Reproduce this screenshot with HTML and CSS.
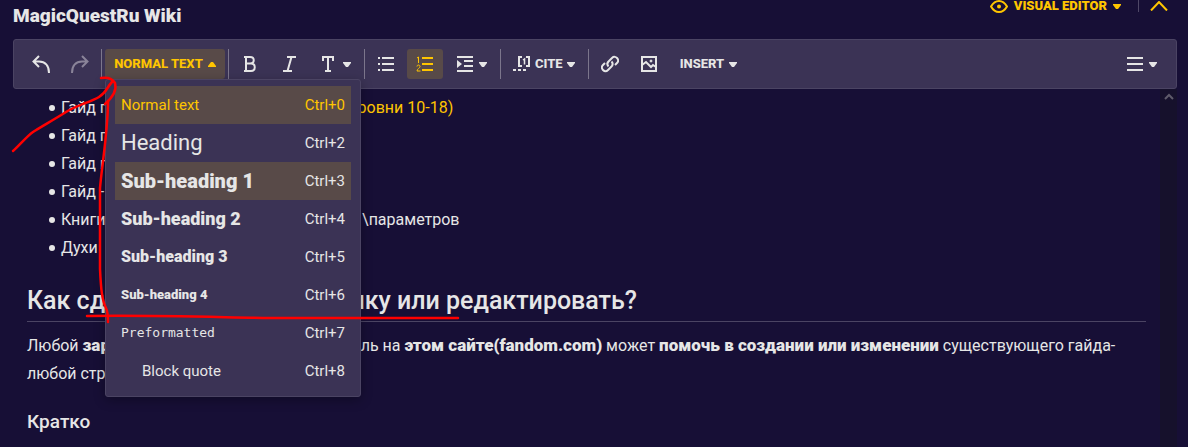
FILE: index.html
```
<!DOCTYPE html>
<html lang="ru">
<head>
  <meta charset="UTF-8">
  <meta name="viewport" content="width=device-width,initial-scale=1.0">
  <title>MagicQuestRu Wiki</title>
  <link rel="stylesheet" href="styles.css">
</head>
<body>
  <header class="page-header">
    <h1 class="wiki-name">MagicQuestRu Wiki</h1>
    <div class="header-tools">
      <button class="mode-btn">
        <svg class="eye" width="18" height="13" viewBox="0 0 18 13" fill="none" stroke="currentColor" stroke-width="2"><path d="M1 6.500C3 3 5.500 1 9 1s6 2 8 5.500C15 10 12.500 12 9 12S3 10 1 6.500z"/><circle cx="9" cy="6.500" r="2" fill="currentColor" stroke="none"/></svg>
        <span>Visual editor</span>
        <svg class="caret" width="8" height="5" viewBox="0 0 8 5"><path d="M0 0h8v1L5 5H3L0 1z" fill="currentColor"/></svg>
      </button>
      <span class="header-sep"></span>
      <button class="collapse-btn" aria-label="Collapse">
        <svg width="18" height="10" viewBox="0 0 18 10" fill="none" stroke="currentColor" stroke-width="2"><path d="M1 9.500L9 1l8 8.500"/></svg>
      </button>
    </div>
  </header>

  <div class="toolbar" role="toolbar">
    <button class="tool" aria-label="Undo">
      <svg width="18" height="18" viewBox="0 0 18 18" fill="none" stroke="currentColor" stroke-width="2"><path d="M7 1L1.500 6.500 7 12M1.500 6.500H7c6 0 10 4 10 11.500"/></svg>
    </button>
    <button class="tool tool-off" aria-label="Redo" disabled>
      <svg width="18" height="18" viewBox="0 0 18 18" fill="none" stroke="currentColor" stroke-width="2"><path d="M11 1l5.500 5.500L11 12M16.500 6.500H11C5 6.500 1 10.500 1 18"/></svg>
    </button>
    <span class="sep"></span>
    <div class="format">
      <button class="tool tool-active format-btn" aria-expanded="true">
        <span>Normal text</span>
        <svg class="caret" width="8" height="5" viewBox="0 0 8 5"><path d="M0 5h8V4L5 0H3L0 4z" fill="currentColor"/></svg>
      </button>
      <div class="menu" role="menu">
        <button class="item item-current" role="menuitem"><span>Normal text</span><kbd>Ctrl+0</kbd></button>
        <button class="item" role="menuitem"><span class="f-heading">Heading</span><kbd>Ctrl+2</kbd></button>
        <button class="item item-hover" role="menuitem"><span class="f-sub1">Sub-heading 1</span><kbd>Ctrl+3</kbd></button>
        <button class="item" role="menuitem"><span class="f-sub2">Sub-heading 2</span><kbd>Ctrl+4</kbd></button>
        <button class="item" role="menuitem"><span class="f-sub3">Sub-heading 3</span><kbd>Ctrl+5</kbd></button>
        <button class="item" role="menuitem"><span class="f-sub4">Sub-heading 4</span><kbd>Ctrl+6</kbd></button>
        <button class="item" role="menuitem"><span class="f-pre">Preformatted</span><kbd>Ctrl+7</kbd></button>
        <button class="item" role="menuitem"><span class="f-quote">Block quote</span><kbd>Ctrl+8</kbd></button>
      </div>
    </div>
    <span class="sep"></span>
    <button class="tool" aria-label="Bold">
      <svg width="18" height="18" viewBox="0 0 18 18" fill="none" stroke="currentColor" stroke-width="2"><path d="M3 2h6c5 0 5 6.500 0 6.500H5h5c5 0 5 7.500 0 7.500H3M5 2v14"/></svg>
    </button>
    <button class="tool" aria-label="Italic">
      <svg width="18" height="18" viewBox="0 0 18 18" fill="none" stroke="currentColor" stroke-width="2"><path d="M7 2h9M3 16h9M11.500 2l-4 14"/></svg>
    </button>
    <button class="tool tool-drop" aria-label="Text style">
      <svg width="18" height="18" viewBox="0 0 18 18" fill="none" stroke="currentColor" stroke-width="2"><path d="M3 6V2h10v4M8 2v14M5 16h6"/></svg>
      <svg class="caret" width="8" height="5" viewBox="0 0 8 5"><path d="M0 0h8v1L5 5H3L0 1z" fill="currentColor"/></svg>
    </button>
    <span class="sep"></span>
    <button class="tool" aria-label="Bullet list">
      <svg width="18" height="18" viewBox="0 0 18 18" fill="currentColor"><path d="M1 2h2v2H1zM1 8h2v2H1zM1 14h2v2H1zM5 2h12v2H5zM5 8h12v2H5zM5 14h12v2H5z"/></svg>
    </button>
    <button class="tool tool-active" aria-label="Numbered list">
      <svg width="18" height="18" viewBox="0 0 18 18" fill="none" stroke="currentColor"><path d="M6 3h11M6 9h11M6 15h11" stroke-width="2"/><path d="M1 3l1.500-1V8M1 11.500c0-2 3-2 3 0C4 13 1 14 1 16h3.500" stroke-width="1"/></svg>
    </button>
    <button class="tool tool-drop" aria-label="Indent">
      <svg width="18" height="18" viewBox="0 0 18 18" fill="currentColor"><path d="M1 1h16v2H1zM8 5h9v2H8zM8 10h9v2H8zM1 15h16v2H1zM1 5l5 4-5 4z"/></svg>
      <svg class="caret" width="8" height="5" viewBox="0 0 8 5"><path d="M0 0h8v1L5 5H3L0 1z" fill="currentColor"/></svg>
    </button>
    <span class="sep"></span>
    <button class="tool tool-text tool-cite">
      <svg width="18" height="18" viewBox="0 0 18 18" fill="none" stroke="currentColor" stroke-width="2"><path d="M9 2H6v9h3M13 2h3v9h-3"/><path d="M10 5l1.500-1v5.500" stroke-width="1.500"/><path d="M0 15h3M5 15h3M10 15h3"/></svg>
      <span>Cite</span>
      <svg class="caret" width="8" height="5" viewBox="0 0 8 5"><path d="M0 0h8v1L5 5H3L0 1z" fill="currentColor"/></svg>
    </button>
    <span class="sep"></span>
    <button class="tool" aria-label="Link">
      <svg width="18" height="18" viewBox="0 0 18 18" fill="none" stroke="currentColor" stroke-width="2"><path d="M7.500 11.500C5 9 7 7 8 6l3-3c2-2 4-1 5 0s2 3 0 5l-2 2M10.500 6.500C13 9 11 11 10 12l-3 3c-2 2-4 1-5 0s-2-3 0-5l2-2"/></svg>
    </button>
    <button class="tool" aria-label="Image">
      <svg width="18" height="18" viewBox="0 0 18 18" fill="none" stroke="currentColor" stroke-width="2"><path d="M2 2h14v14H2z"/><path d="M2 10l4-3 5 5 2-2 3 2" stroke-width="2"/><circle cx="11" cy="6" r="1" fill="currentColor" stroke-width="1"/></svg>
    </button>
    <button class="tool tool-text">
      <span>Insert</span>
      <svg class="caret" width="8" height="5" viewBox="0 0 8 5"><path d="M0 0h8v1L5 5H3L0 1z" fill="currentColor"/></svg>
    </button>
    <button class="tool tool-drop tool-last" aria-label="Page options">
      <svg width="18" height="18" viewBox="0 0 18 18" fill="currentColor"><path d="M1 2h16v2H1zM1 8h16v2H1zM1 14h16v2H1z"/></svg>
      <svg class="caret" width="8" height="5" viewBox="0 0 8 5"><path d="M0 0h8v1L5 5H3L0 1z" fill="currentColor"/></svg>
    </button>
  </div>

  <div class="editor">
    <main class="content">
      <ul class="guides">
        <li>Гайд по <a href="#">прохождению подземелий — (уровни 10-18)</a></li>
        <li>Гайд по заклинаниям</li>
        <li>Гайд по предметам</li>
        <li>Гайд - питомцы</li>
        <li>Книги для прибавления, характеристик \параметров</li>
        <li>Духи</li>
      </ul>
      <h2>Как сделать другую страничку или редактировать?</h2>
      <p>Любой <b>зарегистрированный</b> — пользователь на <b>этом сайте(fandom.com)</b> может <b>помочь в создании или изменении</b> существующего гайда-любой страницы</p>
      <h3>Кратко</h3>
    </main>
    <div class="scroll-track">
      <svg width="10" height="7" viewBox="0 0 10 7" fill="none" stroke="currentColor" stroke-width="2"><path d="M1 6l4-4 4 4"/></svg>
    </div>
  </div>

  <!-- hand-drawn marks over the menu -->
  <svg class="marks" width="470" height="330" viewBox="0 0 470 330" fill="none" stroke="#f00" stroke-width="2.500" stroke-linecap="round" stroke-linejoin="round" aria-hidden="true">
    <path d="M13 151C19 146 27 136 33 132S55 119 66 112C77 105 91 102 99 97S107 87 112 82"/>
    <path d="M101 78C107 77 112 78 115 83C117 90 113 97 105 104"/>
    <path d="M108 101C108 130 102 165 100 188V269C101 290 102 300 106 308C108 312 108 317 108 322"/>
    <path d="M87 316C150 315 210 317 270 318H458"/>
  </svg>
</body>
</html>
```
FILE: styles.css
```
* { box-sizing:border-box; }
body { margin:0; min-height:100vh; display:flex; flex-direction:column; position:relative;
       background:#170f36; color:#e6e6e6; font:16px/28px Roboto,sans-serif; }
button { font:inherit; color:inherit; background:none; border:0; padding:0; margin:0; cursor:pointer; }
b { font-size:17px; font-weight:900; }
svg { flex:none; display:block; }

.page-header { display:flex; justify-content:space-between; align-items:flex-start;
               height:39px; padding:0 20px 0 13px; }
.wiki-name { margin:0; font-size:19px; line-height:32px; font-weight:900; }
.header-tools { display:flex; align-items:center; height:12px; color:#ffc500; }
.mode-btn { display:flex; align-items:center; gap:6px; font-size:13px; line-height:12px;
            font-weight:900; text-transform:uppercase; }
.header-sep { width:1px; height:12px; margin:0 11px 0 17px; background:#4f4867; }

.toolbar { display:flex; gap:3px; margin:0 11px 0 13px; padding:9px; background:#3b3355;
           border:1px solid #4b4463; border-radius:3px; }
.tool { display:flex; align-items:center; justify-content:center; gap:5px; width:36px; height:30px;
        border-radius:3px; font-size:13px; line-height:16px; font-weight:800; text-transform:uppercase; }
.tool-drop { width:51px; }
.tool-text { width:auto; padding:0 10px; }
.tool-cite { gap:4px; padding-left:9px; }
.tool-active { background:#584a48; color:#ffc500; }
.tool-off { color:#8a8499; }
.tool-last { margin-left:auto; }
.sep { width:1px; height:30px; background:#7c768c; }

.format { position:relative; }
.format-btn { width:120px; }
.menu { position:absolute; z-index:2; top:30px; left:0; width:256px; padding:6px 9px;
        background:#3b3355; border:1px solid #4b4463; border-radius:3px;
        box-shadow:0 3px 12px rgba(0,0,0,.3); }
.item { display:flex; align-items:center; justify-content:space-between; width:100%; height:38px;
        padding:0 6px; font-size:15px; line-height:20px; }
.item kbd { font:inherit; }
.item-current { background:#584a48; color:#ffc500; }
.item-hover { background:#584a48; }
.f-heading { font-size:22px; }
.f-sub1 { font-size:20px; font-weight:900; }
.f-sub2 { font-size:18px; font-weight:900; }
.f-sub3 { font-size:16px; font-weight:900; }
.f-sub4 { font-size:13px; font-weight:900; }
.f-pre { font-family:"DejaVu Sans Mono","Liberation Mono",monospace; font-size:13px; }
.f-quote { padding-left:21px; }

.editor { flex:1; display:flex; margin:0 11px 0 13px; }
.content { flex:1; padding:5px 14px 0; }
.content a { color:#ffc500; text-decoration:none; }
.guides { margin:0; padding:0 0 0 22px; list-style:none; }
.guides li::before { content:""; display:inline-block; width:6px; height:6px; margin-right:6px;
                     border-radius:50%; background:#e6e6e6; vertical-align:2px; }
.content h2 { margin:23px 0 9px; padding-bottom:4px; font-size:25px; line-height:32px; font-weight:500;
              border-bottom:1px solid #4b4463; }
.content p { margin:0; }
.content h3 { margin:20px 0 0; font-size:19px; line-height:28px; font-weight:500; }
.scroll-track { display:flex; justify-content:center; align-items:flex-start; width:17px; padding-top:4px;
                background:#16112c; color:#5f5b6b; }
.marks { position:absolute; z-index:3; top:0; left:0; pointer-events:none; }
```
